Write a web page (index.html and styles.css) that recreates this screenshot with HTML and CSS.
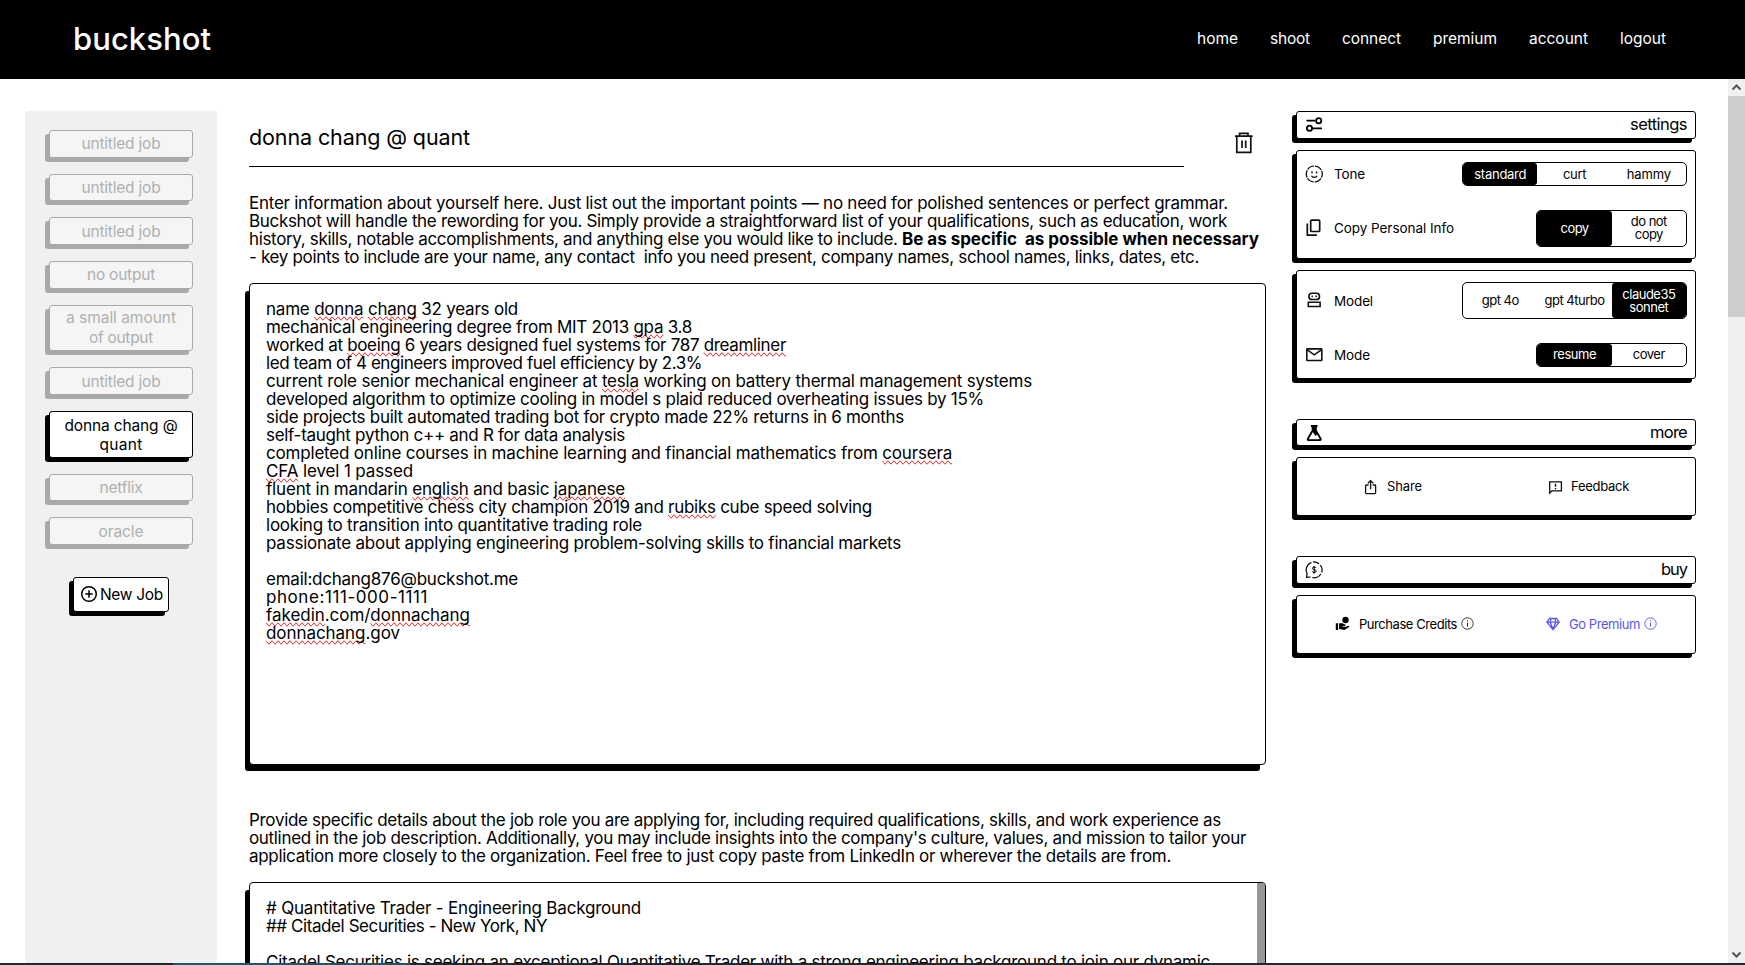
FILE: index.html
```html
<!DOCTYPE html>
<html lang="en">
<head>
<meta charset="utf-8">
<title>buckshot</title>
<link rel="stylesheet" href="styles.css">
</head>
<body>
<header class="topbar">
  <div class="logo"><span data-w="138">buckshot</span></div>
  <nav class="nav">
    <a data-w="41">home</a><a data-w="40">shoot</a><a data-w="59">connect</a><a data-w="64">premium</a><a data-w="59">account</a><a data-w="46">logout</a>
  </nav>
</header>
<div class="page">
  <aside class="sidebar">
    <div class="job"><span data-w="79">untitled job</span></div>
    <div class="job"><span data-w="79">untitled job</span></div>
    <div class="job"><span data-w="79">untitled job</span></div>
    <div class="job"><span data-w="68">no output</span></div>
    <div class="job tall"><span data-w="110">a small amount</span><span data-w="64">of output</span></div>
    <div class="job"><span data-w="79">untitled job</span></div>
    <div class="job tall active"><span data-w="113">donna chang @</span><span data-w="43">quant</span></div>
    <div class="job"><span data-w="43">netflix</span></div>
    <div class="job"><span data-w="45">oracle</span></div>
    <button class="newjob"><svg width="18" height="18" viewBox="0 0 18 18" fill="none" stroke="#000" stroke-width="1.5"><circle cx="9" cy="9" r="7.3"/><path d="M9 5.2v7.6M5.2 9h7.6"/></svg><span data-w="63">New Job</span></button>
  </aside>

  <main class="main">
    <div class="titlerow">
      <div class="title"><span data-w="221">donna chang @ quant</span></div>
      <svg class="trash" width="20" height="22" viewBox="0 0 20 22" fill="none" stroke="#111" stroke-width="1.7"><path d="M1 4.2h17.600M2.800 4.200v16.200h14V4.200M5.600 3.800V1.400h8.400v2.400M8 8.400v7.600M11.700 8.400v7.600"/></svg>
    </div>
    <div class="para">
      <div><span data-w="979">Enter information about yourself here. Just list out the important points — no need for polished sentences or perfect grammar.</span></div>
      <div><span data-w="978">Buckshot will handle the rewording for you. Simply provide a straightforward list of your qualifications, such as education, work</span></div>
      <div><span data-w="653">history, skills, notable accomplishments, and anything else you would like to include. </span><b data-w="357">Be as specific  as possible when necessary</b></div>
      <div><span data-w="950">- key points to include are your name, any contact  info you need present, company names, school names, links, dates, etc.</span></div>
    </div>
    <div class="area first">
      <div><span data-w="252">name <i>donna</i> <i>chang</i> 32 years old</span></div>
      <div><span data-w="426">mechanical engineering degree from MIT 2013 <i>gpa</i> 3.8</span></div>
      <div><span data-w="520">worked at <i>boeing</i> 6 years designed fuel systems for 787 <i>dreamliner</i></span></div>
      <div><span data-w="436">led team of 4 engineers improved fuel efficiency by 2.3%</span></div>
      <div><span data-w="766">current role senior mechanical engineer at <i>tesla</i> working on battery thermal management systems</span></div>
      <div><span data-w="718">developed algorithm to optimize cooling in model s plaid reduced overheating issues by 15%</span></div>
      <div><span data-w="638">side projects built automated trading bot for crypto made 22% returns in 6 months</span></div>
      <div><span data-w="359">self-taught python c++ and R for data analysis</span></div>
      <div><span data-w="686">completed online courses in machine learning and financial mathematics from <i>coursera</i></span></div>
      <div><span data-w="147"><i>CFA</i> level 1 passed</span></div>
      <div><span data-w="359">fluent in mandarin <i>english</i> and basic <i>japanese</i></span></div>
      <div><span data-w="606">hobbies competitive chess city champion 2019 and <i>rubiks</i> cube speed solving</span></div>
      <div><span data-w="376">looking to transition into quantitative trading role</span></div>
      <div><span data-w="635">passionate about applying engineering problem-solving skills to financial markets</span></div>
      <div></div>
      <div><span data-w="252">email:dchang876@buckshot.me</span></div>
      <div><span data-w="162">phone:111-000-1111</span></div>
      <div><span data-w="204"><i>fakedin</i>.com/<i>donnachang</i></span></div>
      <div><span data-w="134"><i>donnachang</i>.gov</span></div>
    </div>
    <div class="para second">
      <div><span data-w="972">Provide specific details about the job role you are applying for, including required qualifications, skills, and work experience as</span></div>
      <div><span data-w="997">outlined in the job description. Additionally, you may include insights into the company's culture, values, and mission to tailor your</span></div>
      <div><span data-w="922">application more closely to the organization. Feel free to just copy paste from LinkedIn or wherever the details are from.</span></div>
    </div>
    <div class="area next">
      <div><span data-w="375"># Quantitative Trader - Engineering Background</span></div>
      <div><span data-w="281">## Citadel Securities - New York, NY</span></div>
      <div></div>
      <div><span data-w="944">Citadel Securities is seeking an exceptional Quantitative Trader with a strong engineering background to join our dynamic</span></div>
      <div class="areabar"></div>
    </div>
  </main>

  <section class="panel">
    <div class="bar">
      <svg width="18" height="18" viewBox="0 0 18 18" fill="none" stroke="#000" stroke-width="1.8"><path d="M1.5 4.700h8.800M8 12.300h9"/><circle cx="13.700" cy="4.700" r="2.600"/><circle cx="4.500" cy="12.300" r="2.600"/></svg>
      <span data-w="57">settings</span>
    </div>
    <div class="card options upper">
      <div class="row">
        <svg width="18" height="18" viewBox="0 0 18 18" fill="none" stroke="#000" stroke-width="1.2"><circle cx="9.300" cy="9" r="8" stroke-dasharray="7.4 .98" stroke-dashoffset="3.7"/><path d="M6.500 10.800c1 2.100 4.600 2.100 5.600 0"/><path d="M7 6.600v1.600M11.600 6.600v1.600" stroke-width="1.5"/></svg>
        <label data-w="31">Tone</label>
        <div class="seg"><span class="on"><em data-w="52">standard</em></span><span><em data-w="23">curt</em></span><span><em data-w="44">hammy</em></span></div>
      </div>
      <div class="row">
        <svg width="18" height="18" viewBox="0 0 18 18" fill="none" stroke="#111" stroke-width="1.7"><rect x="5.700" y="1.200" width="9" height="11.300" rx="1"/><path d="M2.300 4.400v11.700h9.600"/></svg>
        <label data-w="120">Copy Personal Info</label>
        <div class="seg high"><span class="on"><em data-w="28">copy</em></span><span><em data-w="36">do not</em><em data-w="28">copy</em></span></div>
      </div>
    </div>
    <div class="card options lower">
      <div class="row">
        <svg width="18" height="18" viewBox="0 0 18 18" fill="none" stroke="#111" stroke-width="1.6"><rect x="3.900" y="1.300" width="10.600" height="6.200" rx="3.100"/><path d="M3.300 14.500v-4.200h11.800v4.200z"/><path d="M6.500 4.400h1.400M10.500 4.400h1.400"/></svg>
        <label data-w="39">Model</label>
        <div class="seg high"><span><em data-w="37">gpt 4o</em></span><span><em data-w="60">gpt 4turbo</em></span><span class="on"><em data-w="53">claude35</em><em data-w="39">sonnet</em></span></div>
      </div>
      <div class="row">
        <svg width="18" height="18" viewBox="0 0 18 18" fill="none" stroke="#111" stroke-width="1.6"><rect x="1.800" y="2.900" width="15" height="11.600" rx=".6"/><path d="M2.300 3.900l7 4.900 7-4.900"/></svg>
        <label data-w="36">Mode</label>
        <div class="seg"><span class="on"><em data-w="43">resume</em></span><span><em data-w="32">cover</em></span></div>
      </div>
    </div>

    <div class="bar spaced short">
      <svg width="18" height="18" viewBox="0 0 18 18"><path fill="#000" fill-rule="evenodd" d="M5.900 1h6.600v2h-.7v3.200l4.600 8.100c.8 1.400 0 2.700-1.500 2.700H3.600c-1.500 0-2.300-1.300-1.500-2.700L6.700 6.200V3h-.8zM7.900 8 3.900 14.800q-.2.500.3.500h10.100q.5 0 .3-.5l-2.400-4.200-1.800 1.500z"/></svg>
      <span data-w="37">more</span>
    </div>
    <div class="card links">
      <div class="link share">
        <svg class="low" width="14" height="16" viewBox="0 0 14 16" fill="none" stroke="#111" stroke-width="1.3"><path d="M4.600 6H2.400q-.8 0-.8.800v7q0 .8.8.8h8.400q.8 0 .8-.800v-7q0-.8-.8-.8H8.600M6.600 10.300V1.700M3.900 4.300l2.700-2.700 2.700 2.700"/></svg>
        <span data-w="35">Share</span>
      </div>
      <div class="link feedback">
        <svg class="low" width="15" height="15" viewBox="0 0 15 15" fill="none" stroke="#111" stroke-width="1.3"><path d="M1.700 13.100V1.900h11.700v8.900H3.900z"/><path d="M7.500 3.700v3.100M7.500 7.900v1.300" stroke-width="1.400"/></svg>
        <span data-w="58">Feedback</span>
      </div>
    </div>

    <div class="bar spaced">
      <svg width="18" height="18" viewBox="0 0 18 18" fill="none" stroke="#000" stroke-width="1.200"><path d="M6.400 1.400A8 8 0 0 0 2.100 12.600L1.600 16.400l4-.4M7.200 16.500a8 8 0 0 0 8.600-3.500M16.700 11.500a8 8 0 0 0-1.300-7.400M14 2.700A8 8 0 0 0 8 .9"/><path d="M11.100 7q-.3-1-1.900-1T7.400 7.300q0 1.100 1.800 1.400 2 .3 2 1.500t-2 1.300q-1.700 0-2-1.200M9.200 4.900v7.700" stroke-width="1"/></svg>
      <span data-w="26">buy</span>
    </div>
    <div class="card links">
      <div class="link purchase">
        <svg width="15" height="15" viewBox="0 0 15 15"><circle cx="10.500" cy="4" r="3.200"/><path d="M.8 7.200h2.300v6.900H.8zM4.100 7.200h3.300l3 1.500q.5.700-.3 1.200H7.600v.8h3.200l2.900-1q.9.300.5 1.200L9.400 14.100l-5.300-1z"/></svg>
        <span data-w="98">Purchase Credits</span>
        <svg class="info" width="13" height="13" viewBox="0 0 13 13" fill="none" stroke="#222"><circle cx="6.500" cy="6.500" r="5.700" stroke-width=".9"/><path d="M6.500 5.600v4M6.500 3.200v1.100"/></svg>
      </div>
      <div class="link premium">
        <svg width="14" height="14" viewBox="0 0 14 14" fill="none" stroke="#5856f4" stroke-width="1.300" stroke-linejoin="round"><path d="M3.300 1.500h7.400l2.500 3.700L7 12.700.8 5.200zM.8 5.200h12.400M4.200 5.200 7 12.300l2.800-7.100M4.200 5.200l.7-3.500M9.800 5.200l-.7-3.500"/></svg>
        <span data-w="71">Go Premium</span>
        <svg class="info" width="13" height="13" viewBox="0 0 13 13" fill="none" stroke="#5856f4"><circle cx="6.500" cy="6.500" r="5.700" stroke-width=".9"/><path d="M6.500 5.600v4M6.500 3.200v1.100"/></svg>
      </div>
    </div>
  </section>

  <div class="scroll">
    <svg width="17" height="17" viewBox="0 0 17 17" fill="none" stroke="#555" stroke-width="2"><path d="M4.500 10.500l4-4 4 4"/></svg>
    <div class="thumb"></div>
    <svg class="down" width="17" height="17" viewBox="0 0 17 17" fill="none" stroke="#555" stroke-width="2"><path d="M4.500 6.500l4 4 4-4"/></svg>
  </div>
</div>
<div class="strip"><div class="lit"></div></div>
<script src="fit.js"></script>
</body>
</html>
```
FILE: styles.css
```css
* { box-sizing: border-box; }
body {
  margin: 0;
  width: 1745px;
  height: 965px;
  overflow: hidden;
  display: flex;
  flex-direction: column;
  background: #fff;
  color: #000;
  font-family: Inter, "Liberation Sans", sans-serif;
  font-size: 17px;
}
[data-w] { display: inline-block; white-space: pre; font-style: normal; }
svg { display: block; flex: none; }

.topbar {
  height: 79px;
  flex: none;
  background: #000;
  color: #fff;
  display: flex;
  justify-content: space-between;
  align-items: center;
  padding: 0 79px 2px 73px;
}
.logo { font-size: 31px; font-weight: 500; line-height: 36px; }
.nav { display: flex; gap: 32px; font-size: 15.5px; line-height: 20px; padding-top: 1px; }

.page { display: flex; height: 884px; flex: none; overflow: hidden; }

.sidebar {
  width: 192px;
  height: 852px;
  margin: 32px 0 0 25px;
  padding: 19.2px 24px 0;
  background: #f0f0f0;
  border-radius: 3px;
  flex: none;
}
.job {
  height: 27.6px;
  margin-bottom: 16px;
  padding-top: 1px;
  border: 1px solid #a9a9a9;
  border-radius: 3px;
  background: #f5f5f5;
  box-shadow: -4px 4px 0 #a9a9a9;
  color: #b0b0b0;
  display: flex;
  flex-direction: column;
  align-items: center;
  justify-content: center;
  font-size: 15.5px;
  line-height: 20px;
}
.tall { height: 46.8px; }
.active { background: #fff; color: #000; border-color: #000; box-shadow: -4px 4px 0 #000; line-height: 19px; }
.newjob {
  width: 96px;
  height: 35px;
  margin: 32px auto 0;
  padding: 0 0 0 6px;
  border: 1px solid #000;
  border-radius: 3px;
  background: #fff;
  box-shadow: -4px 4px 0 #000;
  font: 15.5px Inter, sans-serif;
  color: #000;
  display: flex;
  align-items: center;
  gap: 2px;
}

.main { width: 1017px; margin-left: 32px; flex: none; }
.titlerow { height: 114px; display: flex; justify-content: space-between; padding: 42px 12px 0 0; }
.title { width: 935px; height: 46px; border-bottom: 1px solid #000; font-size: 21.5px; line-height: 33px; }
.trash { margin-top: 11px; }
.para { line-height: 18px; height: 90px; padding-top: 1px; white-space: nowrap; }
.para div { height: 18px; }
.para b { font-weight: 700; }
.area {
  position: relative;
  border: 1px solid #000;
  border-radius: 4px;
  background: #fff;
  box-shadow: -5px 7px 0 -1px #000;
  padding: 16px 16px 0;
  line-height: 18px;
}
.area div { height: 18px; }
.area i {
  font-style: normal;
  text-decoration-line: spelling-error;
}
.first { height: 482px; }
.second { margin-top: 45px; height: 72px; }
.next { height: 300px; }
.area .areabar { position: absolute; right: 0; top: 0; width: 8px; height: 298px; background: #969696; border-radius: 0 3px 3px 0; }

.panel { width: 400px; margin: 32px 0 0 30px; flex: none; }
.bar, .card { border: 1px solid #000; border-radius: 3px; background: #fff; box-shadow: -4px 4px 0 #000; }
.bar { height: 28px; display: flex; align-items: center; justify-content: space-between; padding: 0 8px; font-size: 16.5px; line-height: 18px; }
.bar span { margin-top: -2px; }
.card { margin-top: 11px; }
.options { height: 109px; padding: 0 8px; }
.row { display: flex; align-items: center; }
.upper .row { height: 46px; }
.upper .row + .row { height: 62px; }
.lower .row { height: 59px; }
.lower .row + .row { height: 49px; }
.row label { font-size: 13.5px; line-height: 18px; margin-left: 11px; }
.seg { margin-left: auto; height: 24px; display: flex; border: 1px solid #000; border-radius: 5px; overflow: hidden; font-size: 13px; line-height: 13px; }
.seg span { width: 74.3px; display: flex; flex-direction: column; align-items: center; justify-content: center; }
.seg .on { background: #000; color: #fff; border-radius: 3px; }
.seg.high { height: 37px; }
.spaced { margin-top: 40px; }
.short { height: 27px; }
.links { height: 59px; padding: 0 0 2px; display: flex; align-items: center; }
.link { width: 50%; display: flex; align-items: center; font-size: 13px; line-height: 16px; }
.link span { margin-left: 9px; }
.share { padding-left: 67px; }
.feedback { padding-left: 52px; }
.feedback span { margin-left: 8px; }
.purchase { padding-left: 38px; }
.premium { padding-left: 50px; color: #5856f4; }
.low { margin-top: 3px; }
.link .info { margin-left: 4px; }

.scroll { width: 17px; margin-left: auto; height: 884px; background: #f0f0f0; flex: none; display: flex; flex-direction: column; }
.thumb { height: 221px; background: #cdcdcd; }
.down { margin-top: auto; }
.strip { height: 2px; background: #1c2b33; flex: none; }
.lit { width: 237px; height: 2px; margin-left: 173px; background: #20566a; }
```
FILE: fit.js
```js
// Tracks each label so that it fills the width given in data-w.
document.querySelectorAll('[data-w]').forEach(function (el) {
  var target = parseFloat(el.dataset.w);
  var natural = el.getBoundingClientRect().width;
  var count = el.textContent.length;
  el.style.letterSpacing = ((target - natural) / count).toFixed(4) + 'px';
});
```
